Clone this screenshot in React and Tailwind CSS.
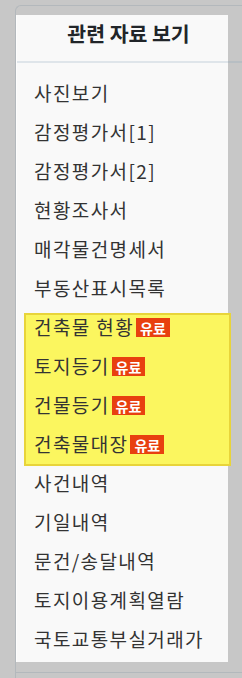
import React from 'react';

const items = [
  { label: '사진보기' },
  { label: '감정평가서[1]' },
  { label: '감정평가서[2]' },
  { label: '현황조사서' },
  { label: '매각물건명세서' },
  { label: '부동산표시목록' },
];

const paidItems = ['건축물 현황', '토지등기', '건물등기', '건축물대장'];

const moreItems = ['사건내역', '기일내역', '문건/송달내역', '토지이용계획열람', '국토교통부실거래가'];

// Single list row
const Row = ({ label, paid }) => (
  <div className="flex items-center h-[39px] pl-[17px] whitespace-nowrap">
    <span className="text-[19px] tracking-[1.4px] text-[#333]">{label}</span>
    {paid && (
      <span className="ml-[2px] h-[19px] px-[4px] flex items-center bg-[#e8400f] text-white text-[14px] font-bold leading-none">
        유료
      </span>
    )}
  </div>
);

export default function App() {
  return (
    <div
      className="w-full h-[678px] bg-[#c7c7c7] overflow-hidden pt-[5px] pl-[15px]"
      style={{ fontFamily: '"Noto Sans CJK KR", "Noto Sans", sans-serif' }}
    >
      <div className="h-full flex flex-col border-l border-t border-[#b3b8bc] rounded-tl-[6px]">
        <div className="flex pt-[9px]">
          {/* Panel */}
          <div className="w-[212px] bg-[#f9f9f9] border-l border-[#fdfdfd] flex flex-col">
            <div className="h-[48px] border-b-2 border-[#dfe5ea] flex justify-center pl-[12px] pt-[4px]">
              <span className="text-[20.5px] font-bold leading-[28px] text-[#212529]">관련 자료 보기</span>
            </div>
            <div className="pt-[11px] pb-[3px]">
              {items.map((it) => (
                <Row key={it.label} label={it.label} />
              ))}
              <div className="relative">
                <div className="absolute left-[7px] right-[-3px] top-[5px] bottom-[-2px] bg-[#fbf65f] border-2 border-[#e8d43a]" />
                <div className="relative">
                  {paidItems.map((label) => (
                    <Row key={label} label={label} paid />
                  ))}
                </div>
              </div>
              {moreItems.map((label) => (
                <Row key={label} label={label} />
              ))}
            </div>
          </div>
          {/* Right side outside the panel */}
          <div className="flex-1">
            <div className="h-[48px] border-b-2 border-[#b7bec3]" />
          </div>
        </div>
        <div className="mt-[10px] border-t border-[#b3b8bc]" />
      </div>
    </div>
  );
}
